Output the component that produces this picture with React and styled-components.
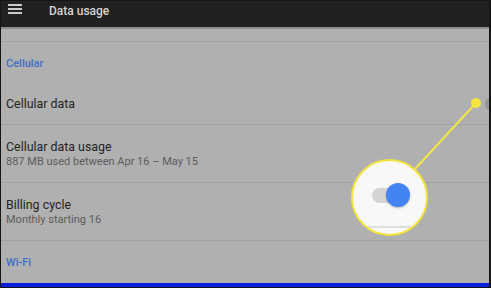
import React from "react";
import styled, { createGlobalStyle } from "styled-components";

const Global = createGlobalStyle`
  html, body { margin: 0; padding: 0; background: #000; }
  body { font-family: Roboto, "Noto Sans", Arial, sans-serif; }
`;

const Frame = styled.div`
  position: relative;
  width: 491px;
  height: 288px;
  box-sizing: border-box;
  border: 1px solid #151515;
  border-right-width: 2px;
  background: #b0b0b0;
  overflow: hidden;
  display: flex;
  flex-direction: column;
`;

const AppBar = styled.header`
  flex: none;
  background: #212121;
  border-bottom: 2px solid #8d8d8d;
  display: flex;
  align-items: flex-start;
  gap: 27px;
  padding: 3px 0 0 7px;
  box-sizing: content-box;
  height: 23px;
`;

const Menu = styled.div`
  width: 14px;
  display: flex;
  flex-direction: column;
  gap: 2px;
  span {
    display: block;
    height: 2px;
    background: #c9c9c9;
  }
`;

const Title = styled.div`
  font-size: 12px;
  line-height: 12px;
  margin-top: 1px;
  font-weight: 500;
  color: #d4d4d4;
`;

const Spacer = styled.div`
  height: 12px;
  flex: none;
  border-bottom: 1px solid #a1a1a1;
`;

const SectionHeader = styled.div`
  height: 42px;
  flex: none;
  display: flex;
  align-items: center;
  padding-left: 5px;
  font-size: 11px;
  font-weight: 500;
  color: #3f6ec4;
`;

const Item = styled.div`
  box-sizing: border-box;
  height: ${(p) => (p.$twoLine ? 58 : 41)}px;
  flex: none;
  border-bottom: 1px solid #a2a2a2;
  padding-left: 5px;
  display: flex;
  flex-direction: ${(p) => (p.$twoLine ? "column" : "row")};
  align-items: ${(p) => (p.$twoLine ? "flex-start" : "center")};
  justify-content: ${(p) => (p.$twoLine ? "flex-start" : "space-between")};
  padding-top: ${(p) => (p.$twoLine ? 14 : 0)}px;
`;

const ItemTitle = styled.div`
  font-size: 12.4px;
  line-height: 16px;
  color: #242424;
`;

const ItemSub = styled.div`
  font-size: 11px;
  line-height: 14px;
  color: #5c5c5c;
`;

const EdgeSwitch = styled.div`
  width: 30px;
  height: 12px;
  margin-right: -26px;
  border-radius: 6px;
  background: #a0a0a0;
  position: relative;
  &::before {
    content: "";
    position: absolute;
    left: 0;
    top: -1px;
    width: 14px;
    height: 14px;
    border-radius: 50%;
    background: #959595;
  }
`;

const BottomBar = styled.div`
  height: 4px;
  flex: none;
  background: #0a1fdc;
`;

const Callout = styled.svg`
  position: absolute;
  left: -1px;
  top: -1px;
  width: 491px;
  height: 288px;
  pointer-events: none;
`;

const Magnifier = styled.div`
  position: absolute;
  left: 350px;
  top: 158px;
  width: 77px;
  height: 77px;
  box-sizing: border-box;
  border: 2px solid #f2e43c;
  border-radius: 50%;
  background: #f8f8f8;
  overflow: hidden;
`;

const MagTrack = styled.div`
  position: absolute;
  left: 19px;
  top: 27px;
  width: 34px;
  height: 15px;
  border-radius: 8px;
  background: #d4d4d4;
`;

const MagKnob = styled.div`
  position: absolute;
  left: 33px;
  top: 22px;
  width: 24px;
  height: 24px;
  border-radius: 50%;
  background: #4284f2;
  box-shadow: 0 1px 2px rgba(0, 0, 0, 0.25);
`;

const MagDivider = styled.div`
  position: absolute;
  left: 0;
  right: 0;
  top: 65px;
  height: 2px;
  background: #dedede;
`;

export default function App() {
  return (
    <>
      <Global />
      <Frame>
        <AppBar>
          <Menu>
            <span />
            <span />
            <span />
          </Menu>
          <Title>Data usage</Title>
        </AppBar>
        <Spacer />
        <SectionHeader>Cellular</SectionHeader>
        <Item>
          <ItemTitle>Cellular data</ItemTitle>
          <EdgeSwitch />
        </Item>
        <Item $twoLine>
          <ItemTitle>Cellular data usage</ItemTitle>
          <ItemSub>887 MB used between Apr 16 – May 15</ItemSub>
        </Item>
        <Item $twoLine>
          <ItemTitle>Billing cycle</ItemTitle>
          <ItemSub>Monthly starting 16</ItemSub>
        </Item>
        <SectionHeader>Wi-Fi</SectionHeader>
        <BottomBar />
        <Callout viewBox="0 0 491 288">
          <line x1="476" y1="103" x2="414" y2="170" stroke="#f3e54a" strokeWidth="2" />
          <circle cx="476" cy="103" r="5" fill="#f5e63e" />
        </Callout>
        <Magnifier>
          <MagTrack />
          <MagKnob />
          <MagDivider />
        </Magnifier>
      </Frame>
    </>
  );
}
